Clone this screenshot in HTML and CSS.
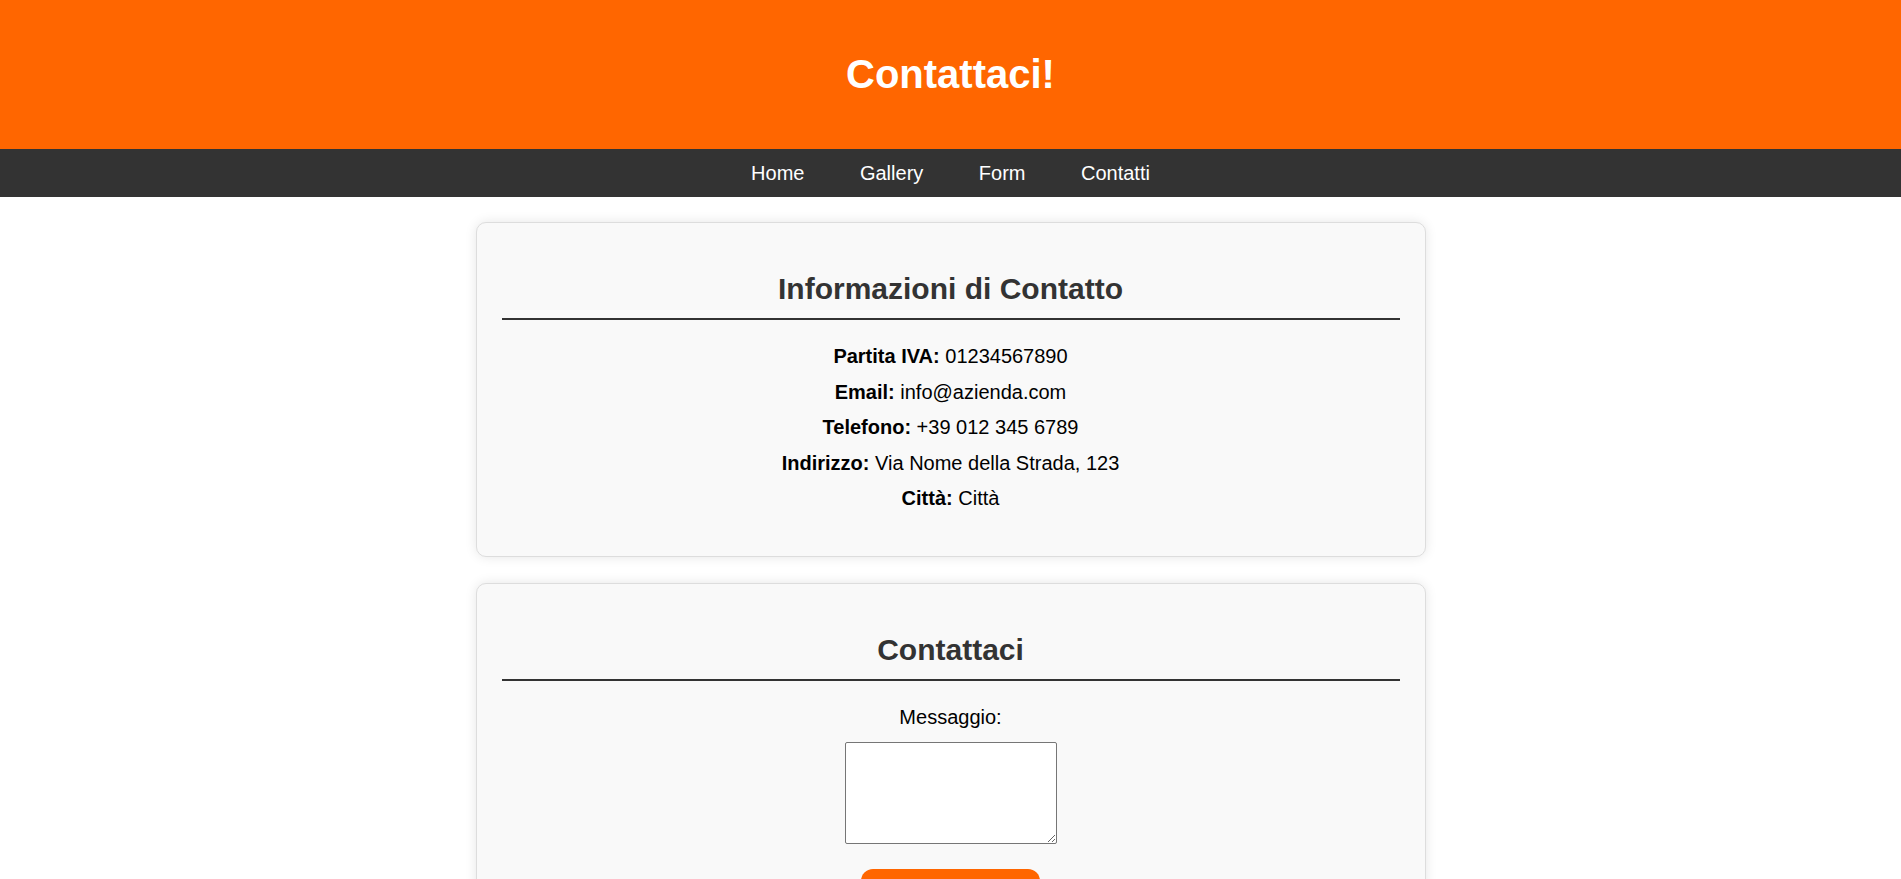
FILE: index.html
```html
<!DOCTYPE html>
<html lang="it">
<head>
<meta charset="utf-8">
<title>Contattaci!</title>
<link rel="stylesheet" href="styles.css">
</head>
<body>
<header class="site-header">
  <h1 class="site-title">Contattaci!</h1>
</header>
<nav class="main-nav">
  <a class="nav-link" href="#">Home</a>
  <a class="nav-link" href="#">Gallery</a>
  <a class="nav-link" href="#">Form</a>
  <a class="nav-link" href="#">Contatti</a>
</nav>
<main class="content">
  <section class="card">
    <h2 class="card-title">Informazioni di Contatto</h2>
    <p class="info-line"><strong>Partita IVA:</strong> 01234567890</p>
    <p class="info-line"><strong>Email:</strong> info@azienda.com</p>
    <p class="info-line"><strong>Telefono:</strong> +39 012 345 6789</p>
    <p class="info-line"><strong>Indirizzo:</strong> Via Nome della Strada, 123</p>
    <p class="info-line"><strong>Città:</strong> Città</p>
  </section>
  <section class="card">
    <h2 class="card-title">Contattaci</h2>
    <form class="contact-form">
      <label class="form-label" for="messaggio">Messaggio:</label>
      <textarea class="form-textarea" id="messaggio" name="messaggio"></textarea>
      <button class="form-button" type="submit">Invia Messaggio</button>
    </form>
  </section>
</main>
</body>
</html>
```
FILE: styles.css
```css
html, body {
  margin: 0;
  padding: 0;
}
body {
  font-family: "Liberation Sans", Arial, sans-serif;
  font-size: 20px;
  color: #000;
  background: #fff;
}
.site-header {
  background: #ff6600;
  padding: 51px 0 52px;
  text-align: center;
}
.site-title {
  margin: 0;
  color: #fff;
  font-size: 40px;
  line-height: 46px;
  font-weight: bold;
}
.main-nav {
  background: #333333;
  display: flex;
  justify-content: center;
  gap: 55.5px;
  padding: 12.5px 0;
}
.nav-link {
  color: #fff;
  text-decoration: none;
  font-size: 20px;
  line-height: 23px;
}
.content {
  padding-top: 25px;
}
.card {
  width: 950px;
  box-sizing: border-box;
  margin: 0 auto 26px;
  background: #f9f9f9;
  border: 1px solid #dddddd;
  border-radius: 10px;
  box-shadow: 0 0 12px rgba(0, 0, 0, 0.1);
  padding: 25px 25px 33px;
  text-align: center;
}
.card-title {
  margin: 24px 0 25px;
  font-size: 30px;
  line-height: 34.5px;
  color: #333;
  padding-bottom: 11.5px;
  border-bottom: 2px solid #333;
}
.info-line {
  margin: 12.5px 0;
  line-height: 23px;
}
.contact-form {
  display: flex;
  flex-direction: column;
  align-items: center;
}
.form-label {
  line-height: 23px;
  margin-bottom: 13px;
}
.form-textarea {
  width: 212px;
  height: 102px;
  box-sizing: border-box;
  border: 1px solid #767676;
  border-radius: 2px;
  background: #fff;
  margin: 0 0 25px;
}
.form-button {
  width: 179px;
  background: #ff6600;
  color: #fff;
  border: none;
  border-radius: 12px;
  font-family: "Liberation Sans", Arial, sans-serif;
  font-size: 20px;
  padding: 14px 0;
}
```
